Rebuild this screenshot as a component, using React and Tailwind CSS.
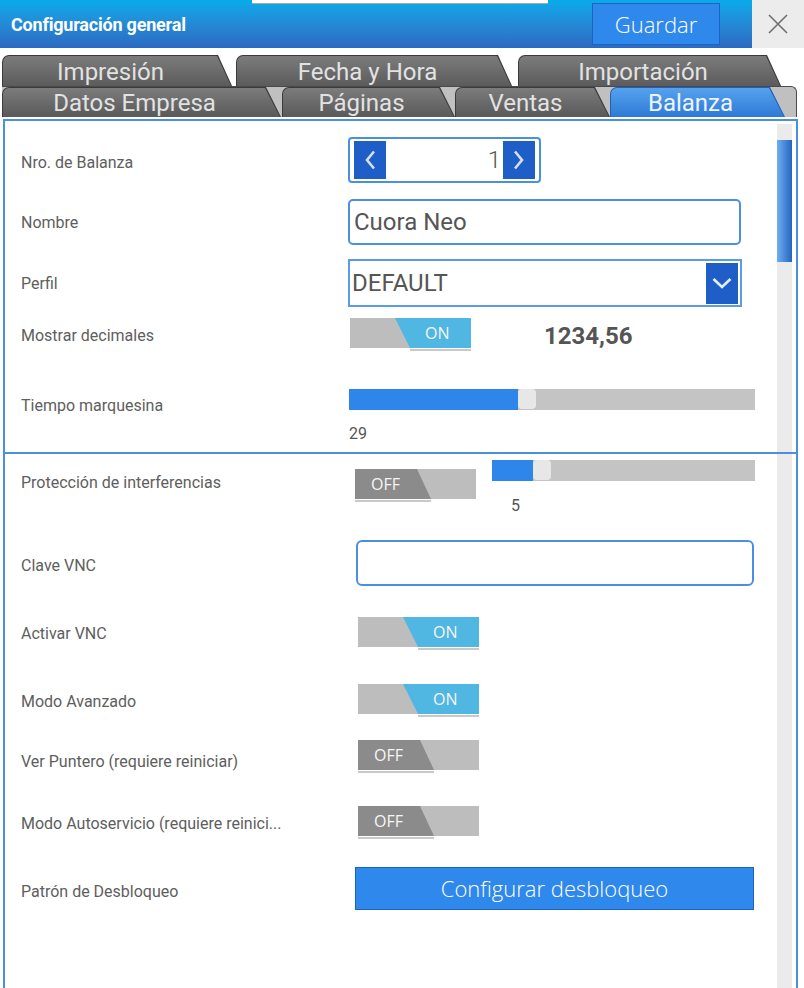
import React from "react";

function Tab({ label, className, active }) {
  return (
    <div
      className={`${className} h-full rounded-tl-[7px] p-[1px] pb-0 [clip-path:polygon(0_0,calc(100%_-_15px)_0,100%_100%,0_100%)] ${
        active ? "bg-[#2160b6]" : "bg-[#3a3a3a]"
      }`}
    >
      <div
        className={`h-full rounded-tl-[6px] flex items-center justify-center pr-[14px] text-[24px] leading-none [clip-path:polygon(0_0,calc(100%_-_15px)_0,100%_100%,0_100%)] ${
          active
            ? "bg-linear-to-b from-[#56a2ee] to-[#2e79d6] text-[#eef4ff]"
            : "bg-linear-to-b from-[#7c7c7c] to-[#595959] text-[#e2e2e2]"
        }`}
      >
        {label}
      </div>
    </div>
  );
}

function Toggle({ on }) {
  return (
    <div className="w-[121px] shrink-0">
      <div className="relative h-[30px] bg-[#bdbdbd] overflow-hidden">
        {on ? (
          <div className="absolute inset-0 bg-[#4fb7e2] [clip-path:polygon(45px_0,100%_0,100%_100%,60px_100%)]" />
        ) : (
          <div className="absolute inset-0 bg-[#8b8b8b] [clip-path:polygon(0_0,62px_0,76px_100%,0_100%)]" />
        )}
        <div
          className={`absolute inset-0 flex items-center text-[16px] text-[#f6f6f6] font-['Open_Sans',sans-serif] ${
            on ? "pl-[75px]" : "pl-[16px]"
          }`}
        >
          {on ? "ON" : "OFF"}
        </div>
      </div>
      <div
        className={
          on
            ? "ml-[60px] w-[61px] mt-[1px] h-[2px] bg-[#c9c9c9]"
            : "w-[76px] mt-[1px] h-[2px] bg-[#c9c9c9]"
        }
      />
    </div>
  );
}

function Chevron({ dir }) {
  if (dir === "left")
    return (
      <svg width="12" height="20" viewBox="0 0 12 20">
        <path d="M10 1.5 L3 10 L10 18.5" fill="none" stroke="#d2e2fb" strokeWidth="2.6" />
      </svg>
    );
  if (dir === "right")
    return (
      <svg width="12" height="20" viewBox="0 0 12 20">
        <path d="M2 1.5 L9 10 L2 18.5" fill="none" stroke="#d2e2fb" strokeWidth="2.6" />
      </svg>
    );
  return (
    <svg width="20" height="12" viewBox="0 0 20 12">
      <path d="M1.5 2 L10 10 L18.5 2" fill="none" stroke="#e4eefc" strokeWidth="2.6" />
    </svg>
  );
}

const labelCls = "text-[16px] leading-[19px] text-[#5e5e5e] whitespace-nowrap";

export default function App() {
  return (
    <div className="relative w-[804px] h-[988px] overflow-hidden bg-white font-['Roboto',sans-serif]">
      {/* Header */}
      <div className="flex h-[48px]">
        <div className="flex-1 flex items-center bg-linear-to-b from-[#05abea] to-[#2c69c2] pl-[11px] pr-[32px]">
          <span className="flex-1 text-white font-bold text-[18px] tracking-[-0.2px]">
            Configuración general
          </span>
          <div className="w-[128px] h-[42px] bg-[#2f88ec] border border-[#1f62c4] flex items-center justify-center text-white text-[22px] font-light font-['Open_Sans',sans-serif]">
            Guardar
          </div>
        </div>
        <div className="w-[52px] bg-[#ececec] flex items-center justify-center">
          <svg width="22" height="22" viewBox="0 0 22 22">
            <path d="M2 2 L20 20 M20 2 L2 20" stroke="#6e6e6e" strokeWidth="1.6" fill="none" />
          </svg>
        </div>
      </div>
      <div className="absolute left-[252px] top-0 w-[296px] h-[4px] bg-white border-b border-[#a9a9a9]" />

      {/* Tabs */}
      <div className="mt-[7px]">
        <div className="flex h-[33px] pl-[2px]">
          <Tab label="Impresión" className="w-[231px]" />
          <Tab label="Fecha y Hora" className="w-[277px] ml-[3px]" />
          <Tab label="Importación" className="w-[264px] ml-[5px]" />
        </div>
        <div className="relative z-10 -mt-[2px] h-[31px] ml-[2px] w-[795px] bg-[#c0c0c0] rounded-tr-[6px] border-t border-r border-[#4a4a4a] flex">
          <Tab label="Datos Empresa" className="w-[279px]" />
          <Tab label="Páginas" className="w-[173px] ml-[1px]" />
          <Tab label="Ventas" className="w-[155px]" />
          <Tab label="Balanza" className="w-[175px]" active />
        </div>
      </div>

      {/* Panel */}
      <div className="mt-[2px] ml-[3px] w-[795px]">
        {/* Section 1 */}
        <div className="h-[335px] border-2 border-[#4a8fe0] flex">
          <div className="flex-1 pl-[16px]">
            {/* Nro de Balanza */}
            <div className="mt-[16px] h-[45px] flex items-center">
              <div className={`w-[327px] pt-[5px] ${labelCls}`}>Nro. de Balanza</div>
              <div className="w-[193px] h-[46px] border-2 border-[#4a90e2] rounded-[4px] px-[4px] py-[2px] flex">
                <div className="w-[32px] bg-[#1f5ec7] flex items-center justify-center">
                  <Chevron dir="left" />
                </div>
                <div className="flex-1 flex items-center justify-end pr-[2px] text-[24px] font-light text-[#555]">1</div>
                <div className="w-[32px] bg-[#1f5ec7] flex items-center justify-center">
                  <Chevron dir="right" />
                </div>
              </div>
            </div>
            {/* Nombre */}
            <div className="mt-[17px] h-[46px] flex items-center">
              <div className={`w-[327px] ${labelCls}`}>Nombre</div>
              <div className="w-[393px] h-[46px] border-2 border-[#4a90e2] rounded-[5px] flex items-center pl-[4px] text-[24px] text-[#555]">
                Cuora Neo
              </div>
            </div>
            {/* Perfil */}
            <div className="mt-[14px] h-[48px] flex items-center">
              <div className={`w-[327px] ${labelCls}`}>Perfil</div>
              <div className="w-[394px] h-[48px] border-2 border-[#5a9ae6] flex items-center justify-between pl-[2px] pr-[2px]">
                <span className="text-[24px] text-[#555]">DEFAULT</span>
                <div className="w-[32px] h-[41px] bg-[#1f5ec7] flex items-center justify-center">
                  <Chevron dir="down" />
                </div>
              </div>
            </div>
            {/* Mostrar decimales */}
            <div className="mt-[11px] flex items-start">
              <div className={`w-[329px] pt-[8px] ${labelCls}`}>Mostrar decimales</div>
              <Toggle on />
              <div className="ml-[73px] mt-[4px] text-[24px] leading-[28px] font-bold text-[#555]">1234,56</div>
            </div>
            {/* Tiempo marquesina */}
            <div className="mt-[38px] flex items-start">
              <div className={`w-[328px] pt-[7px] ${labelCls}`}>Tiempo marquesina</div>
              <div>
                <div className="w-[406px] h-[21px] bg-[#c4c4c4] flex">
                  <div className="w-[169px] bg-[#2f86ea]" />
                  <div className="w-[18px] h-[20px] rounded-[4px] bg-[#e7e7e7]" />
                </div>
                <div className="mt-[14px] text-[16px] leading-[19px] text-[#555]">29</div>
              </div>
            </div>
          </div>
          <div className="w-[15px] mr-[4px] mt-[3px] bg-[#ebebeb] pt-[16px]">
            <div className="h-[122px] bg-linear-to-r from-[#6eaef2] to-[#2465c0]" />
          </div>
        </div>

        {/* Section 2 */}
        <div className="h-[540px] border-x-2 border-[#4a8fe0] flex">
          <div className="flex-1 pl-[16px]">
            {/* Proteccion */}
            <div className="flex items-start">
              <div className={`w-[334px] mt-[19px] ${labelCls}`}>Protección de interferencias</div>
              <div className="mt-[15px]">
                <Toggle on={false} />
              </div>
              <div className="ml-[16px] mt-[6px]">
                <div className="w-[263px] h-[21px] bg-[#c4c4c4] flex">
                  <div className="w-[41px] bg-[#2f86ea]" />
                  <div className="w-[18px] h-[20px] rounded-[4px] bg-[#e7e7e7]" />
                </div>
                <div className="ml-[19px] mt-[15px] text-[16px] leading-[19px] text-[#555]">5</div>
              </div>
            </div>
            {/* Clave VNC */}
            <div className="mt-[25px] h-[46px] flex items-center">
              <div className={`w-[335px] pt-[4px] ${labelCls}`}>Clave VNC</div>
              <div className="w-[398px] h-[46px] border-2 border-[#4a90e2] rounded-[6px]" />
            </div>
            {/* Activar VNC */}
            <div className="mt-[31px] flex items-start">
              <div className={`w-[337px] mt-[7px] ${labelCls}`}>Activar VNC</div>
              <Toggle on />
            </div>
            {/* Modo Avanzado */}
            <div className="mt-[34px] flex items-start">
              <div className={`w-[337px] mt-[8px] ${labelCls}`}>Modo Avanzado</div>
              <Toggle on />
            </div>
            {/* Ver Puntero */}
            <div className="mt-[23px] flex items-start">
              <div className={`w-[337px] mt-[12px] ${labelCls}`}>Ver Puntero (requiere reiniciar)</div>
              <Toggle on={false} />
            </div>
            {/* Modo Autoservicio */}
            <div className="mt-[33px] flex items-start">
              <div className={`w-[337px] mt-[8px] ${labelCls}`}>Modo Autoservicio (requiere reinici...</div>
              <Toggle on={false} />
            </div>
            {/* Patron */}
            <div className="mt-[28px] h-[43px] flex items-center">
              <div className={`w-[334px] pt-[6px] ${labelCls}`}>Patrón de Desbloqueo</div>
              <div className="w-[399px] h-[43px] bg-[#2f88ec] border border-[#1f62c4] flex items-center justify-center text-white text-[22px] font-light font-['Open_Sans',sans-serif]">
                Configurar desbloqueo
              </div>
            </div>
          </div>
          <div className="w-[15px] mr-[4px] bg-[#ebebeb]" />
        </div>
      </div>
    </div>
  );
}
